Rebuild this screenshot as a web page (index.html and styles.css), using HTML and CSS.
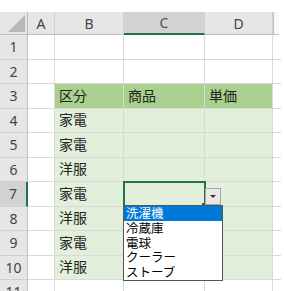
FILE: index.html
```html
<!DOCTYPE html>
<html lang="ja">
<head>
    <meta charset="UTF-8">
    <title>入力規則リスト</title>
    <link rel="stylesheet" href="styles.css">
</head>
<body>

<div class="sheet">
    <div class="grid">
        <!-- 列見出し -->
        <div class="hd corner"><span class="tri"></span></div>
        <div class="hd col">A</div>
        <div class="hd col">B</div>
        <div class="hd col active-col">C</div>
        <div class="hd col">D</div>
        <div class="hd col rest"></div>

        <div class="hd row">1</div><div class="c"></div><div class="c"></div><div class="c"></div><div class="c"></div><div class="c rest"></div>
        <div class="hd row">2</div><div class="c"></div><div class="c"></div><div class="c"></div><div class="c"></div><div class="c rest"></div>
        <div class="hd row">3</div><div class="c"></div><div class="c th">区分</div><div class="c th">商品</div><div class="c th">単価</div><div class="c rest"></div>
        <div class="hd row">4</div><div class="c"></div><div class="c td">家電</div><div class="c td"></div><div class="c td"></div><div class="c rest"></div>
        <div class="hd row">5</div><div class="c"></div><div class="c td">家電</div><div class="c td"></div><div class="c td"></div><div class="c rest"></div>
        <div class="hd row">6</div><div class="c"></div><div class="c td">洋服</div><div class="c td"></div><div class="c td"></div><div class="c rest"></div>
        <div class="hd row active-row">7</div><div class="c"></div><div class="c td">家電</div><div class="c td selected"></div><div class="c td"></div><div class="c rest"></div>
        <div class="hd row">8</div><div class="c"></div><div class="c td">洋服</div><div class="c td"></div><div class="c td"></div><div class="c rest"></div>
        <div class="hd row">9</div><div class="c"></div><div class="c td">家電</div><div class="c td"></div><div class="c td"></div><div class="c rest"></div>
        <div class="hd row">10</div><div class="c"></div><div class="c td">洋服</div><div class="c td"></div><div class="c td"></div><div class="c rest"></div>
        <div class="hd row">11</div><div class="c"></div><div class="c"></div><div class="c"></div><div class="c"></div><div class="c rest"></div>
    </div>

    <!-- ドロップダウン -->
    <div class="fill-handle"></div>
    <div class="dd-btn"><span class="arrow"></span></div>
    <ul class="dd-list">
        <li class="on">洗濯機</li>
        <li>冷蔵庫</li>
        <li>電球</li>
        <li>クーラー</li>
        <li>ストーブ</li>
    </ul>
</div>

</body>
</html>
```

FILE: styles.css
```css
body {
    margin: 0;
    background-color: #fff;
    font-family: "Noto Sans", "Noto Sans CJK JP", sans-serif;
    overflow: hidden;
}
.sheet {
    position: relative;
    width: 284px;
    height: 291px;
    padding-top: 12px;
    box-sizing: border-box;
    overflow: hidden;
}
.grid {
    display: grid;
    grid-template-columns: 28px 27px 69px 81px 68px 6px;
    grid-template-rows: 23px repeat(11, 24.5px);
}
.c {
    border-right: 1px solid #d9d9d9;
    border-bottom: 1px solid #d9d9d9;
    font-family: "Noto Sans CJK JP", sans-serif;
    font-size: 14px;
    color: #222;
    padding: 0 4px;
    display: flex;
    align-items: center;
    line-height: 1;
    padding-bottom: 2px;
    box-sizing: border-box;
}
.c.rest {
    border-right: none;
}
.th {
    background-color: #a9d08e;
}
.td {
    background-color: #e2efda;
}
.selected {
    outline: 2px solid #217346;
    outline-offset: -1px;
    position: relative;
    z-index: 1;
}
.hd {
    background-color: #e6e6e6;
    color: #444;
    font-size: 14px;
    display: flex;
    align-items: center;
    justify-content: center;
    box-sizing: border-box;
}
.hd.col {
    border-right: 1px solid #d0d0d0;
    border-bottom: 1px solid #bdbdbd;
}
.hd.col.rest {
    background-color: #f7f7f7;
    border-right: none;
    border-left: 1px solid #bdbdbd;
}
.hd.row {
    border-right: 1px solid #bdbdbd;
    border-bottom: 1px solid #d0d0d0;
}
.hd.corner {
    position: relative;
    border-right: 1px solid #bdbdbd;
    border-bottom: 1px solid #bdbdbd;
}
.tri {
    position: absolute;
    right: 2px;
    bottom: 2px;
    width: 0;
    height: 0;
    border-left: 17px solid transparent;
    border-bottom: 17px solid #b8b8b8;
}
.active-col {
    background-color: #d2d2d2;
    border-bottom: 2px solid #217346 !important;
    color: #555;
}
.active-row {
    background-color: #d2d2d2;
    border-right: 2px solid #217346 !important;
}
.fill-handle {
    position: absolute;
    left: 202px;
    top: 203px;
    width: 5px;
    height: 4px;
    background-color: #217346;
    z-index: 2;
}
.dd-btn {
    position: absolute;
    left: 205px;
    top: 188px;
    width: 16px;
    height: 17px;
    box-sizing: border-box;
    background-color: #e8e8e8;
    border: 1px solid #a6a6a6;
    display: flex;
    align-items: center;
    justify-content: center;
    z-index: 2;
}
.arrow {
    width: 0;
    height: 0;
    border-left: 3px solid transparent;
    border-right: 3px solid transparent;
    border-top: 3px solid #333;
}
.dd-list {
    position: absolute;
    left: 123px;
    top: 205px;
    width: 98px;
    margin: 0;
    padding: 0;
    list-style-type: none;
    background-color: #fff;
    border: 1px solid #555;
    z-index: 3;
}
.dd-list li {
    height: 14.8px;
    line-height: 14.8px;
    padding-left: 2px;
    font-family: "Noto Sans CJK JP", sans-serif;
    font-size: 12.5px;
    color: #000;
    white-space: nowrap;
}
.dd-list li.on {
    background-color: #0078d7;
    color: #fff;
}
```
